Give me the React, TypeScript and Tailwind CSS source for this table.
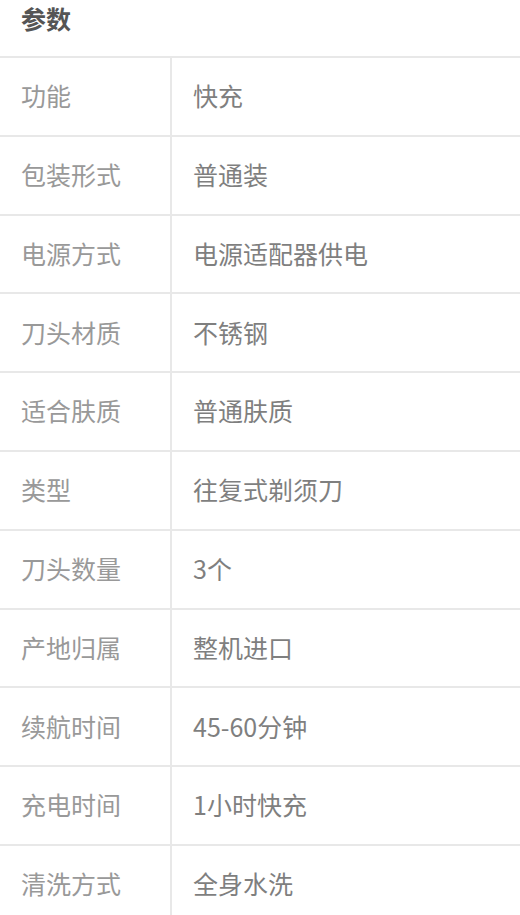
import React from 'react';

const rows: [string, string][] = [
  ['功能', '快充'],
  ['包装形式', '普通装'],
  ['电源方式', '电源适配器供电'],
  ['刀头材质', '不锈钢'],
  ['适合肤质', '普通肤质'],
  ['类型', '往复式剃须刀'],
  ['刀头数量', '3个'],
  ['产地归属', '整机进口'],
  ['续航时间', '45-60分钟'],
  ['充电时间', '1小时快充'],
  ['清洗方式', '全身水洗'],
];

export default function App() {
  return (
    <div
      className="w-[520px] h-[915px] overflow-hidden bg-white"
      style={{ fontFamily: '"Noto Sans CJK SC", "Noto Sans", sans-serif' }}
    >
      {/* Section title */}
      <div className="h-[56px] px-[21px] pt-[3px]">
        <span className="text-[25px] leading-[30px] font-bold text-[#555]">参数</span>
      </div>

      {/* Spec table */}
      <div className="border-t-2 border-[#e8e8e8]">
        {rows.map(([label, value]) => (
          <div key={label} className="flex h-[78.8px] border-b-2 border-[#e8e8e8]">
            <div className="w-[172px] shrink-0 border-r-2 border-[#e8e8e8] flex items-center pl-[21px] pb-[1px] text-[25px] text-[#999]">
              {label}
            </div>
            <div className="flex-1 flex items-center pl-[21px] pb-[1px] text-[25px] text-[#7f7f7f]">
              {value}
            </div>
          </div>
        ))}
      </div>
    </div>
  );
}
